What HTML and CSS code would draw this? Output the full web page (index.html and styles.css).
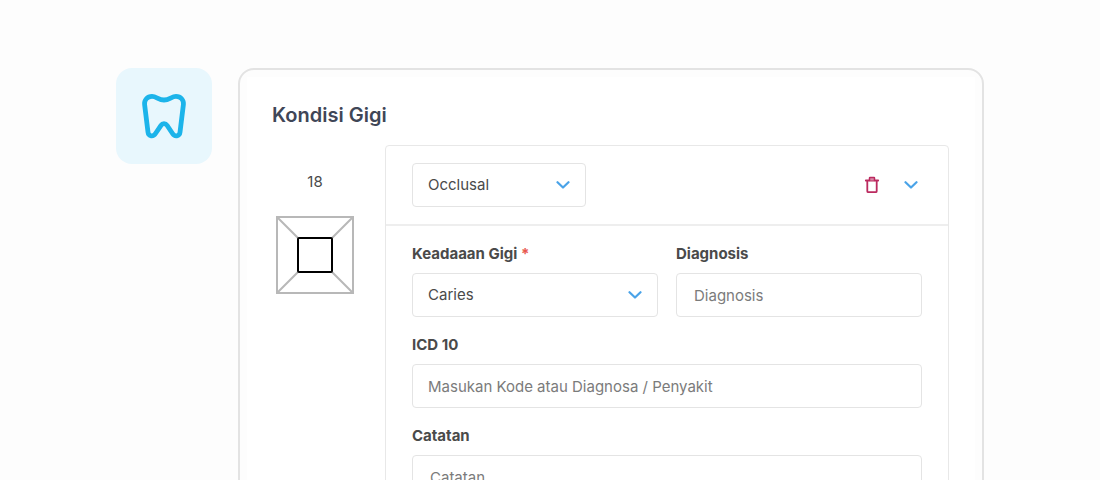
FILE: index.html
```html
<!DOCTYPE html>
<html lang="id">
<head>
<meta charset="utf-8">
<meta name="viewport" content="width=device-width, initial-scale=1">
<title>Kondisi Gigi</title>
<link rel="stylesheet" href="styles.css">
</head>
<body>
<main class="page">
  <div class="badge">
    <svg class="badge-icon" viewBox="0 0 48 48" aria-hidden="true">
      <path d="M24 8C18.5 8 16.5 4.4 12 4.4C7.300 4.400 4.100 8 4.600 12.500L8 40.300C8.500 44.500 13.300 45 15.500 41.500L21 33.300C22.500 31 25.500 31 27 33.300L32.500 41.500C34.700 45 39.500 44.500 40 40.300L43.400 12.500C43.900 8 40.700 4.400 36 4.400C31.500 4.400 29.500 8 24 8Z"/>
    </svg>
  </div>
  <section class="card">
    <div class="card-inner">
      <h1 class="title">Kondisi Gigi</h1>
      <div class="content">
        <div class="tooth">
          <span class="tooth-number">18</span>
          <svg class="tooth-chart" viewBox="0 0 78 78" aria-hidden="true">
            <path class="chart-outer" d="M1 1H77V77H1ZM1 1L22 22M77 1L56 22M1 77L22 56M77 77L56 56"/>
            <rect class="chart-center" x="22" y="22" width="34" height="34" rx="1"/>
          </svg>
        </div>
        <form class="entry">
          <div class="entry-head">
            <div class="select-wrap surface">
              <select class="control" aria-label="Permukaan"><option>Occlusal</option></select>
              <svg class="chevron select-chevron" viewBox="0 0 14 8" aria-hidden="true"><path d="M1.500 1.200L7 6.500L12.500 1.200"/></svg>
            </div>
            <div class="actions">
              <button class="icon-button" type="button" aria-label="Hapus">
                <svg class="trash" viewBox="0 0 16 18" aria-hidden="true">
                  <path d="M1.800 4.500H14.200M3.300 4.500V15.200Q3.300 16.200 4.300 16.200H11.700Q12.700 16.200 12.700 15.200V4.500"/>
                  <path class="trash-lid" d="M5.500 4.500V2Q5.500 1.500 6 1.500H10Q10.500 1.500 10.500 2V4.500"/>
                </svg>
              </button>
              <button class="icon-button" type="button" aria-label="Buka">
                <svg class="chevron" viewBox="0 0 14 8" aria-hidden="true"><path d="M1.500 1.200L7 6.500L12.500 1.200"/></svg>
              </button>
            </div>
          </div>
          <div class="entry-body">
            <div class="field">
              <label class="label" for="keadaan">Keadaaan Gigi <span class="required">*</span></label>
              <div class="select-wrap">
                <select class="control" id="keadaan"><option>Caries</option></select>
                <svg class="chevron select-chevron" viewBox="0 0 14 8" aria-hidden="true"><path d="M1.500 1.200L7 6.500L12.500 1.200"/></svg>
              </div>
            </div>
            <div class="field">
              <label class="label" for="diagnosis">Diagnosis</label>
              <input class="control indented" id="diagnosis" type="text" placeholder="Diagnosis">
            </div>
            <div class="field wide">
              <label class="label" for="icd">ICD 10</label>
              <input class="control" id="icd" type="text" placeholder="Masukan Kode atau Diagnosa / Penyakit">
            </div>
            <div class="field wide">
              <label class="label" for="catatan">Catatan</label>
              <input class="control indented" id="catatan" type="text" placeholder="Catatan">
            </div>
          </div>
        </form>
      </div>
    </div>
  </section>
</main>
</body>
</html>
```
FILE: styles.css
```css
* {
  box-sizing: border-box;
}

body {
  margin: 0;
  background: #fdfdfd;
  color: #4a4a4a;
  font-family: Inter, "Liberation Sans", sans-serif;
  font-size: 15px;
  line-height: 20px;
}

.page {
  display: flex;
  align-items: flex-start;
  gap: 26px;
  height: 100vh;
  padding: 68px 116px 0;
  overflow: hidden;
}

.badge {
  display: grid;
  flex: none;
  place-items: center;
  width: 96px;
  height: 96px;
  border-radius: 16px;
  background: #e8f7fd;
}

.badge-icon {
  width: 48px;
  height: 48px;
  fill: none;
  stroke: #1cb4ea;
  stroke-width: 4.800;
  stroke-linejoin: round;
}

.card {
  flex: 1;
  min-width: 0;
  padding: 7px;
  border: 2px solid #e3e3e3;
  border-radius: 16px;
}

.card-inner {
  padding: 24px 26px 24px 25px;
  background: #fff;
}

.title {
  margin: 0 0 16px;
  color: #3f4657;
  font-size: 20px;
  font-weight: 600;
  line-height: 28px;
}

.content {
  display: flex;
  align-items: flex-start;
  gap: 27px;
}

.tooth {
  display: flex;
  flex: none;
  flex-direction: column;
  align-items: center;
  gap: 24px;
  width: 86px;
  padding-top: 27px;
}

.tooth-chart {
  width: 78px;
  height: 78px;
  fill: none;
  stroke-width: 2;
}

.chart-outer {
  stroke: #b8b8b8;
}

.chart-center {
  stroke: #000;
}

.entry {
  flex: 1;
  min-width: 0;
  border: 1px solid #e8e8e8;
  border-radius: 4px;
}

.entry-head {
  display: flex;
  align-items: center;
  justify-content: space-between;
  padding: 17px 26px;
  border-bottom: 2px solid #eee;
}

.entry-body {
  display: grid;
  grid-template-columns: 1fr 1fr;
  gap: 18px;
  padding: 18px 26px;
}

.field {
  display: flex;
  flex-direction: column;
  gap: 9px;
  min-width: 0;
}

.wide {
  grid-column: 1 / -1;
}

.label {
  font-weight: 700;
}

.required {
  color: #e8574e;
}

.select-wrap {
  position: relative;
}

.surface {
  width: 174px;
}

.control {
  display: block;
  width: 100%;
  height: 44px;
  padding: 0 15px;
  border: 1px solid #e4e4e4;
  border-radius: 4px;
  appearance: none;
  background: #fff;
  color: #4a4a4a;
  font: inherit;
}

.indented {
  padding-left: 17px;
}

.control::placeholder {
  color: #7b7b7b;
  opacity: 1;
}

.chevron {
  display: block;
  width: 14px;
  height: 8px;
  fill: none;
  stroke: #4aa3e8;
  stroke-width: 2.200;
  stroke-linecap: round;
  stroke-linejoin: round;
}

.select-chevron {
  position: absolute;
  top: 18px;
  right: 16px;
  pointer-events: none;
}

.actions {
  display: flex;
  align-items: center;
  gap: 15px;
  margin-right: -1px;
}

.icon-button {
  display: grid;
  place-items: center;
  width: 24px;
  height: 24px;
  padding: 0;
  border: 0;
  background: none;
}

.trash {
  width: 16px;
  height: 18px;
  fill: none;
  stroke: #bb2a5f;
  stroke-width: 1.800;
  stroke-linecap: round;
}

.trash-lid {
  fill: #d98aa8;
  stroke-width: 1.500;
}
```
